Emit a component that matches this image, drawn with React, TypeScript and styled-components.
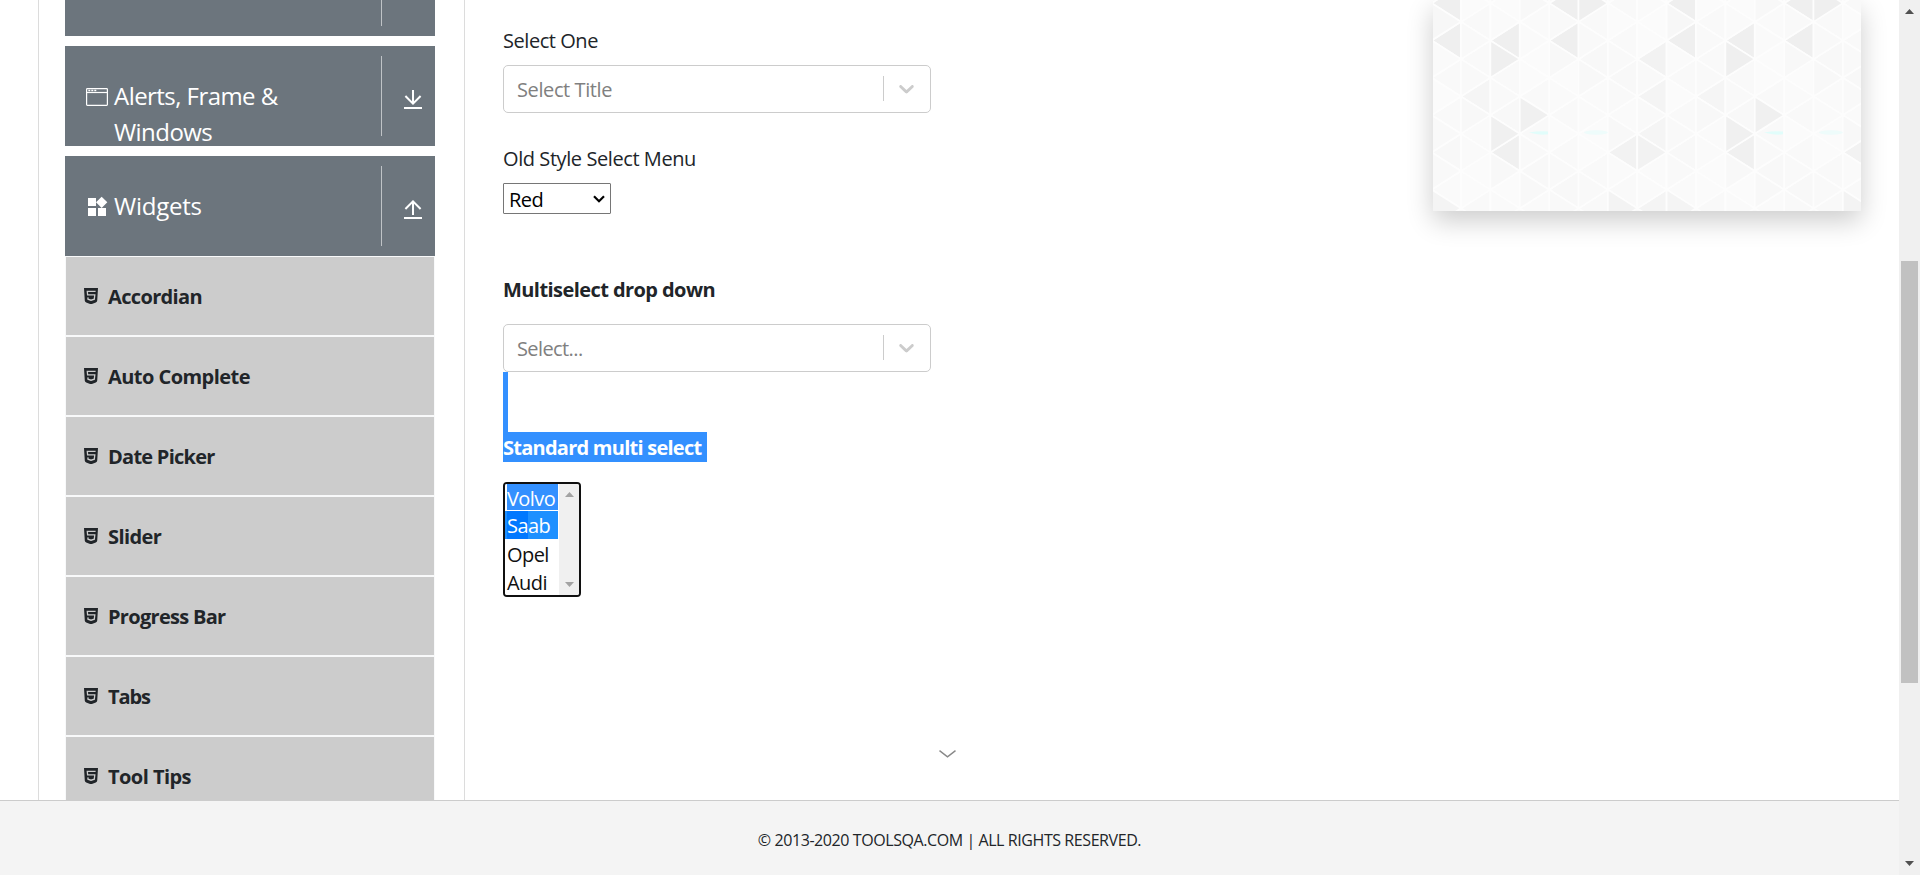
import React from "react";
import styled, { createGlobalStyle } from "styled-components";
import { MdWidgets } from "react-icons/md";

const GlobalStyle = createGlobalStyle`
  * { box-sizing: border-box; }
  body {
    margin: 0;
    overflow: hidden;
    background: #fff;
    color: #212529;
    font: 400 20px/30px "Open Sans", "Noto Sans", sans-serif;
  }
`;

const Window = styled.div`
  display: flex;
  width: 1920px;
  height: 875px;
  overflow: hidden;
`;

const Page = styled.div`
  display: flex;
  flex-direction: column;
  width: 1899px;
  height: 875px;
`;

const Content = styled.div`
  display: flex;
  height: 800px;
  padding-left: 38px;
  overflow: hidden;
`;

const Sidebar = styled.aside`
  width: 427px;
  height: 800px;
  padding: 0 29px 0 26px;
  border-left: 1px solid #dcdcdc;
  border-right: 1px solid #dcdcdc;
  overflow: hidden;
`;

const Group = styled.div<{ $cut?: boolean }>`
  display: flex;
  justify-content: space-between;
  height: ${(p) => (p.$cut ? 36 : 100)}px;
  margin-bottom: ${(p) => (p.$cut ? 10 : 0)}px;
  padding: ${(p) => (p.$cut ? 0 : 10)}px 0 10px 19px;
  background: #6c757d;
  color: #fff;

  & + & { margin-bottom: 10px; }
  & + & + & { margin-bottom: 0; }
`;

const GroupTitle = styled.div<{ $spacing: number }>`
  display: flex;
  gap: 5px;
  width: 260px;
  padding-top: 22px;
  font-size: 24px;
  line-height: 36px;
  letter-spacing: ${(p) => p.$spacing}px;
`;

const GroupIcon = styled.span`
  display: flex;
  flex: none;
  align-items: center;
  justify-content: center;
  width: 25px;
  height: 38px;
`;

const GroupToggle = styled.div`
  display: flex;
  justify-content: center;
  width: 54px;
  padding: 34px 0 0 8px;
  border-left: 1px solid #bfc3c6;
`;

const CutToggle = styled(GroupToggle)`
  padding-top: 0;
`;

const Items = styled.ul`
  margin: 0;
  padding: 0;
  list-style: none;
`;

const Item = styled.li<{ $spacing: number }>`
  display: flex;
  gap: 9px;
  height: 80px;
  padding: 25px 0 0 18px;
  border: 1px solid #f8f9fa;
  background: #ccc;
  font-weight: 700;
  letter-spacing: ${(p) => p.$spacing}px;

  svg { flex: none; margin: 6px 1px 0 0; }
`;

const Main = styled.main`
  display: flex;
  flex: 1;
  justify-content: space-between;
  padding: 0 38px;
`;

const Form = styled.div`
  width: 428px;
  padding-top: 25px;
`;

const Label = styled.div<{ $spacing: number }>`
  height: 30px;
  margin-bottom: 10px;
  line-height: 32px;
  letter-spacing: ${(p) => p.$spacing}px;
  white-space: nowrap;
`;

const Heading = styled.div<{ $spacing: number }>`
  height: 30px;
  margin: 60px 0 20px;
  font-weight: 700;
  line-height: 32px;
  letter-spacing: ${(p) => p.$spacing}px;
`;

const SelectBox = styled.div`
  display: flex;
  align-items: center;
  height: 48px;
  border: 1px solid #ccc;
  border-radius: 5px;
  color: #808080;
`;

const Placeholder = styled.span<{ $spacing: number }>`
  flex: 1;
  padding: 2px 0 0 13px;
  letter-spacing: ${(p) => p.$spacing}px;
`;

const Indicator = styled.span`
  display: flex;
  justify-content: center;
  align-items: center;
  width: 47px;
  height: 25px;
  margin-bottom: 1px;
  padding-right: 2px;
  border-left: 1px solid #ccc;
`;

const OldLabel = styled(Label)`
  margin-top: 30px;
`;

const NativeSelect = styled.div`
  display: flex;
  align-items: center;
  justify-content: space-between;
  width: 108px;
  height: 31px;
  padding: 2px 5px 0 5px;
  border: 1px solid #767676;
  border-radius: 1px;
  color: #000;
  letter-spacing: -0.5px;

  svg { margin-bottom: 1px; }
`;

const SelectedBreak = styled.div`
  width: 5px;
  height: 60px;
  background: #3390ff;
`;

const SelectedHeading = styled.div`
  width: 204px;
  height: 30px;
  margin-bottom: 20px;
  background: #3390ff;
  color: #fff;
  font-weight: 700;
  line-height: 32px;
  letter-spacing: -0.75px;
  white-space: nowrap;
`;

const ListBox = styled.div`
  display: flex;
  width: 78px;
  height: 115px;
  border: 2px solid #101010;
  border-radius: 4px;
  overflow: hidden;
`;

const Options = styled.div`
  flex: 1;
  margin-right: 1px;
`;

const Option = styled.div<{ $kind?: "highlighted" | "chosen" }>`
  height: 28px;
  padding-left: 2px;
  border: 0 solid #fff;
  border-width: ${(p) => (p.$kind === "highlighted" ? "0 0 1px 2px" : "0")};
  ${(p) => p.$kind === "highlighted" && "height: 27px; padding-left: 0;"}
  ${(p) => p.$kind === "chosen" && "margin-bottom: 1px;"}
  background: ${(p) =>
    p.$kind === "highlighted"
      ? "#3390ff"
      : p.$kind === "chosen"
        ? "linear-gradient(90deg, #1e90ff 2px, #0078ff 2px 23px, #1e90ff 23px)"
        : "#fff"};
  color: ${(p) => (p.$kind ? "#fff" : "#101010")};
  letter-spacing: -0.55px;
  line-height: 30px;
`;

const ListScroll = styled.div`
  display: flex;
  flex-direction: column;
  align-items: center;
  justify-content: space-between;
  width: 20px;
  padding: 8px 0;
  background: #f0f0f0;
`;

const Card = styled.div`
  width: 428px;
  height: 211px;
  box-shadow: 0 10px 25px rgba(0, 0, 0, 0.2);

  svg { display: block; }
`;

const ScrollHint = styled.div`
  display: flex;
  width: 17px;
  margin: 153px 0 0 436px;
`;

const Footer = styled.footer`
  display: flex;
  justify-content: center;
  height: 75px;
  padding-top: 27px;
  border-top: 1px solid #ccc;
  background: #f4f4f4;
  font-size: 16px;
  line-height: 24px;
  letter-spacing: -0.42px;
`;

const Scrollbar = styled.div`
  display: flex;
  flex-direction: column;
  align-items: center;
  width: 21px;
  height: 875px;
  padding: 9px 0;
  background: #f0f0f0;
`;

const Thumb = styled.div`
  width: 17px;
  height: 422px;
  margin: 247px 0 auto;
  background: #c1c1c1;
`;

const Triangle = ({ up, color }: { up?: boolean; color: string }) => (
  <svg width="9" height="5" viewBox="0 0 9 5">
    <path d={up ? "M0 5 4.5 0 9 5Z" : "M0 0H9L4.5 5Z"} fill={color} />
  </svg>
);

const WindowIcon = () => (
  <svg width="22" height="18" viewBox="0 0 22 18" fill="none" stroke="#fff">
    <rect x="0.6" y="0.6" width="20.8" height="16.8" rx="0.8" strokeWidth="1.2" />
    <path d="M1 4.5H21" strokeWidth="1.2" />
    <path d="M2.3 2.5H4.3M5.3 2.5H7.3M8.3 2.5H10.3" strokeWidth="1.5" />
  </svg>
);

const ToggleIcon = ({ up }: { up?: boolean }) => (
  <svg width="18" height="19" viewBox="0 0 18 19" fill="none" stroke="#fff" strokeWidth="2">
    <path d={up ? "M9 15V1M1.4 9 9 1.4 16.6 9" : "M9 0V14M1.4 6 9 13.6 16.6 6"} />
    <path d="M0 18H18" />
  </svg>
);

const Html5Icon = () => (
  <svg width="14" height="16" viewBox="0 0 14 16">
    <path d="M0 0H14L13.2 12.6Q13.1 14 11.8 14.6L7.9 15.9Q7 16.1 6.1 15.9L2.2 14.6Q.9 14 .8 12.6Z" fill="#212529" />
    <path d="M11.6 3.4H3.3L3.6 6.9H10.8L10.3 11.2 7 12.2 4 11.2 3.9 9.4" fill="none" stroke="#ccc" strokeWidth="1.3" />
  </svg>
);

const IndicatorIcon = () => (
  <svg width="25" height="25" viewBox="0 0 20 20" fill="#ccc">
    <path d="M4.516 7.548c0.436-0.446 1.043-0.481 1.576 0l3.908 3.747 3.908-3.747c0.533-0.481 1.141-0.446 1.574 0 0.436 0.445 0.408 1.197 0 1.615-0.406 0.418-4.695 4.502-4.695 4.502-0.217 0.223-0.502 0.335-0.787 0.335s-0.57-0.112-0.789-0.335c0 0-4.287-4.084-4.695-4.502s-0.436-1.17 0-1.615z" />
  </svg>
);

const COL = 29.375;
const ROW = 37.3;
const TILE_COLS = 8;

/* Shades keyed by "column:direction:apex row", where column repeats every tile. */
const SHADES: Record<string, string> = {
  "7:L:0": "#efefef", "7:L:1": "#efefef", "1:L:1": "#efefef", "1:R:1": "#efefef",
  "3:L:0": "#efefef", "3:L:1": "#efefef", "4:R:0": "#efefef", "6:L:1": "#f2f2f2",
  "6:L:2": "#f4f4f4", "2:R:3": "#f0f0f0", "1:R:3": "#f0f0f0", "1:L:4": "#f0f0f0",
  "0:L:2": "#f5f5f5", "5:L:4": "#f2f2f2", "6:R:4": "#f2f2f2", "6:L:3": "#f5f5f5",
  "5:R:5": "#f3f3f3", "6:L:5": "#f4f4f4", "7:R:5": "#f4f4f4", "7:R:0": "#f7f7f7",
};
const PALE = ["#fafafa", "#f9f9f9", "#fbfbfb", "#f8f8f8", "#f9f9f9"];

/* A vertex sits on every column line; even and odd lines are offset by half a row. */
const vertexStart = (col: number) => (Math.abs(col) % 2 === 0 ? 21.8 : 3.2);

const Pattern = () => {
  const cells: React.ReactNode[] = [];
  for (let c = -1; c < 15; c++) {
    const left = 28 + c * COL;
    const right = left + COL;
    const tile = (c + TILE_COLS) % TILE_COLS;
    for (const dir of ["L", "R"]) {
      const apexX = dir === "L" ? left : right;
      const baseX = dir === "L" ? right : left;
      const start = vertexStart(dir === "L" ? c : c + 1);
      for (let r = -1; r < 6; r++) {
        const y = start + r * ROW;
        const fill = SHADES[`${tile}:${dir}:${r}`] ?? PALE[(tile * 3 + (r + 1) * 7 + (dir === "L" ? 2 : 0)) % 5];
        cells.push(
          <path key={`${c}${dir}${r}`} d={`M${apexX} ${y}L${baseX} ${y - ROW / 2}V${y + ROW / 2}Z`} fill={fill} />
        );
      }
    }
  }
  return (
    <svg width="428" height="211" viewBox="0 0 428 211">
      <rect width="428" height="211" fill="#fafafa" />
      <g stroke="#fdfdfd" strokeWidth="1.7">{cells}</g>
      <g fill="#dcfffc" opacity="0.8">
        {[0, 235].map((x) => (
          <React.Fragment key={x}>
            <path d={`M${x + 96} 132.6Q${x + 106} 130.5 ${x + 115} 131.4V134.3Q${x + 106} 135.5 ${x + 96} 132.6Z`} />
            <ellipse cx={x + 163} cy="132.5" rx="12" ry="2.2" opacity="0.5" />
          </React.Fragment>
        ))}
      </g>
    </svg>
  );
};

const menu: [string, number][] = [
  ["Accordian", -0.65],
  ["Auto Complete", -0.55],
  ["Date Picker", -0.75],
  ["Slider", -0.6],
  ["Progress Bar", -0.7],
  ["Tabs", -1.1],
  ["Tool Tips", -0.55],
];

export default function App() {
  return (
    <Window>
      <GlobalStyle />
      <Page>
        <Content>
          <Sidebar>
            <Group $cut>
              <span />
              <CutToggle />
            </Group>
            <Group>
              <GroupTitle $spacing={-0.55}>
                <GroupIcon><WindowIcon /></GroupIcon>
                <span>Alerts, Frame &amp;<br />Windows</span>
              </GroupTitle>
              <GroupToggle><ToggleIcon /></GroupToggle>
            </Group>
            <Group>
              <GroupTitle $spacing={-0.25}>
                <GroupIcon><MdWidgets size={24} /></GroupIcon>
                <span>Widgets</span>
              </GroupTitle>
              <GroupToggle><ToggleIcon up /></GroupToggle>
            </Group>
            <Items>
              {menu.map(([name, spacing]) => (
                <Item key={name} $spacing={spacing}><Html5Icon />{name}</Item>
              ))}
            </Items>
          </Sidebar>
          <Main>
            <Form>
              <Label $spacing={-0.45}>Select One</Label>
              <SelectBox>
                <Placeholder $spacing={-0.4}>Select Title</Placeholder>
                <Indicator><IndicatorIcon /></Indicator>
              </SelectBox>
              <OldLabel $spacing={-0.42}>Old Style Select Menu</OldLabel>
              <NativeSelect>
                Red
                <svg width="12" height="8" viewBox="0 0 12 8" fill="none" stroke="#000" strokeWidth="2.2">
                  <path d="M1 1.2 6 6.2 11 1.2" />
                </svg>
              </NativeSelect>
              <Heading $spacing={-0.57}>Multiselect drop down</Heading>
              <SelectBox>
                <Placeholder $spacing={-0.6}>Select...</Placeholder>
                <Indicator><IndicatorIcon /></Indicator>
              </SelectBox>
              <SelectedBreak />
              <SelectedHeading>Standard multi select</SelectedHeading>
              <ListBox>
                <Options>
                  <Option $kind="highlighted">Volvo</Option>
                  <Option $kind="chosen">Saab</Option>
                  <Option>Opel</Option>
                  <Option>Audi</Option>
                </Options>
                <ListScroll>
                  <Triangle up color="#a3a3a3" />
                  <Triangle color="#a3a3a3" />
                </ListScroll>
              </ListBox>
              <ScrollHint>
                <svg width="17" height="8" viewBox="0 0 17 8" fill="none" stroke="#888" strokeWidth="1.4">
                  <path d="M.5 .6 8.5 6.9 16.5 .6" />
                </svg>
              </ScrollHint>
            </Form>
            <Card><Pattern /></Card>
          </Main>
        </Content>
        <Footer>© 2013-2020 TOOLSQA.COM | ALL RIGHTS RESERVED.</Footer>
      </Page>
      <Scrollbar>
        <Triangle up color="#505050" />
        <Thumb />
        <Triangle color="#505050" />
      </Scrollbar>
    </Window>
  );
}
